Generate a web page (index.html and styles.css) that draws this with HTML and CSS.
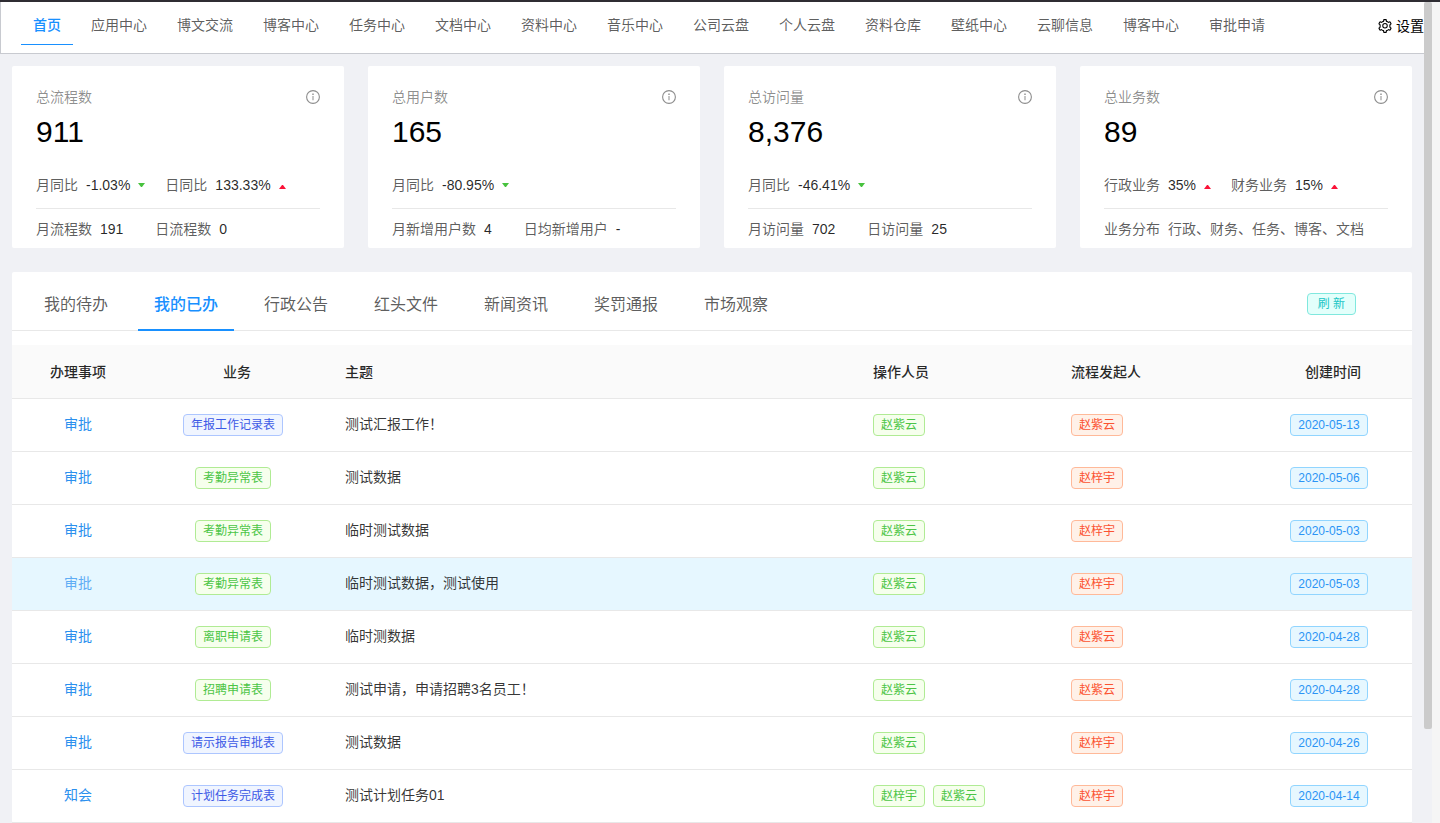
FILE: index.html
```html
<!DOCTYPE html>
<html lang="zh-CN">
<head>
<meta charset="utf-8">
<title>首页</title>
<link rel="stylesheet" href="styles.css">
</head>
<body>
<svg class="sprite" aria-hidden="true">
  <symbol id="info" viewBox="0 0 14 14">
    <circle cx="7" cy="7" r="6.4" fill="none" stroke="currentColor" stroke-width="1.1"/>
    <path d="M6.5 6h1v4.3h-1zM6.3 3.6h1.4V5H6.3z" fill="currentColor"/>
  </symbol>
</svg>
<div class="page">
  <div class="content">
    <header class="topbar">
      <nav class="nav">
        <a class="nav-item active" href="#">首页</a>
        <a class="nav-item" href="#">应用中心</a>
        <a class="nav-item" href="#">博文交流</a>
        <a class="nav-item" href="#">博客中心</a>
        <a class="nav-item" href="#">任务中心</a>
        <a class="nav-item" href="#">文档中心</a>
        <a class="nav-item" href="#">资料中心</a>
        <a class="nav-item" href="#">音乐中心</a>
        <a class="nav-item" href="#">公司云盘</a>
        <a class="nav-item" href="#">个人云盘</a>
        <a class="nav-item" href="#">资料仓库</a>
        <a class="nav-item" href="#">壁纸中心</a>
        <a class="nav-item" href="#">云聊信息</a>
        <a class="nav-item" href="#">博客中心</a>
        <a class="nav-item" href="#">审批申请</a>
      </nav>
      <button class="settings" type="button">
        <svg class="icon" viewBox="64 64 896 896" aria-hidden="true">
          <path fill="currentColor" fill-rule="evenodd" d="M924.8 625.7l-65.5-56c3.1-19 4.7-38.4 4.7-57.8s-1.6-38.8-4.7-57.8l65.5-56a32.03 32.03 0 0 0 9.3-35.2l-.9-2.6a443.74 443.74 0 0 0-79.7-137.9l-1.8-2.1a32.12 32.12 0 0 0-35.1-9.5l-81.3 28.9c-30-24.6-63.5-44-99.7-57.6l-15.7-85a32.05 32.05 0 0 0-25.8-25.7l-2.7-.5c-52.1-9.4-106.9-9.4-159 0l-2.7.5a32.05 32.05 0 0 0-25.8 25.7l-15.8 85.4a351.86 351.86 0 0 0-99 57.4l-81.9-29.1a32 32 0 0 0-35.1 9.5l-1.8 2.1a446.02 446.02 0 0 0-79.7 137.9l-.9 2.6c-4.5 12.5-.8 26.5 9.3 35.2l66.3 56.6c-3.1 18.8-4.6 38-4.6 57.1 0 19.2 1.5 38.4 4.6 57.1L99 625.5a32.03 32.03 0 0 0-9.3 35.2l.9 2.6c18.1 50.4 44.9 96.9 79.7 137.9l1.8 2.1a32.12 32.12 0 0 0 35.1 9.5l81.9-29.1c29.8 24.5 63.1 43.9 99 57.4l15.8 85.4a32.05 32.05 0 0 0 25.8 25.7l2.7.5a449.4 449.4 0 0 0 159 0l2.7-.5a32.05 32.05 0 0 0 25.8-25.7l15.7-85a350 350 0 0 0 99.7-57.6l81.3 28.9a32 32 0 0 0 35.1-9.5l1.8-2.1c34.8-41.1 61.6-87.5 79.7-137.9l.9-2.6c4.5-12.3.8-26.3-9.3-35zM788.3 465.9c2.5 15.1 3.8 30.6 3.8 46.1s-1.3 31-3.8 46.1l-6.6 40.1 74.7 63.9a370.03 370.03 0 0 1-42.6 73.6L721 702.8l-31.4 25.8c-23.9 19.6-50.5 35-79.3 45.8l-38.1 14.3-17.9 97a377.5 377.5 0 0 1-85 0l-17.9-97.2-37.8-14.5c-28.5-10.8-55-26.2-78.7-45.7l-31.4-25.9-93.4 33.2c-17-22.9-31.2-47.6-42.6-73.6l75.5-64.5-6.5-40c-2.4-14.9-3.7-30.3-3.7-45.5 0-15.3 1.2-30.6 3.7-45.5l6.5-40-75.5-64.5c11.3-26.1 25.6-50.7 42.6-73.6l93.4 33.2 31.4-25.9c23.7-19.5 50.2-34.9 78.7-45.7l37.9-14.3 17.9-97.2c28.1-3.2 56.8-3.2 85 0l17.9 97 38.1 14.3c28.7 10.8 55.4 26.2 79.3 45.8l31.4 25.8 92.8-32.9c17 22.9 31.2 47.6 42.6 73.6L781.8 426l6.5 39.9z"/>
          <circle cx="512" cy="502" r="144" fill="none" stroke="currentColor" stroke-width="66"/>
        </svg>
        <span>设置</span>
      </button>
    </header>

    <main class="main">
      <section class="cards">
        <article class="card">
          <div class="card-head"><span>总流程数</span><svg class="icon"><use href="#info"/></svg></div>
          <div class="total">911</div>
          <div class="trends">
            <span class="stat">月同比 <b>-1.03%</b><i class="down"></i></span>
            <span class="stat">日同比 <b>133.33%</b><i class="up"></i></span>
          </div>
          <div class="card-foot">
            <span class="stat">月流程数 <b>191</b></span>
            <span class="stat">日流程数 <b>0</b></span>
          </div>
        </article>
        <article class="card">
          <div class="card-head"><span>总用户数</span><svg class="icon"><use href="#info"/></svg></div>
          <div class="total">165</div>
          <div class="trends">
            <span class="stat">月同比 <b>-80.95%</b><i class="down"></i></span>
          </div>
          <div class="card-foot">
            <span class="stat">月新增用户数 <b>4</b></span>
            <span class="stat">日均新增用户 <b>-</b></span>
          </div>
        </article>
        <article class="card">
          <div class="card-head"><span>总访问量</span><svg class="icon"><use href="#info"/></svg></div>
          <div class="total">8,376</div>
          <div class="trends">
            <span class="stat">月同比 <b>-46.41%</b><i class="down"></i></span>
          </div>
          <div class="card-foot">
            <span class="stat">月访问量 <b>702</b></span>
            <span class="stat">日访问量 <b>25</b></span>
          </div>
        </article>
        <article class="card">
          <div class="card-head"><span>总业务数</span><svg class="icon"><use href="#info"/></svg></div>
          <div class="total">89</div>
          <div class="trends">
            <span class="stat">行政业务 <b>35%</b><i class="up"></i></span>
            <span class="stat">财务业务 <b>15%</b><i class="up"></i></span>
          </div>
          <div class="card-foot">
            <span class="stat">业务分布 <span>行政、财务、任务、博客、文档</span></span>
          </div>
        </article>
      </section>

      <section class="panel">
        <div class="tabbar">
          <div class="tabs" role="tablist">
            <button class="tab" type="button" role="tab">我的待办</button>
            <button class="tab active" type="button" role="tab" aria-selected="true">我的已办</button>
            <button class="tab" type="button" role="tab">行政公告</button>
            <button class="tab" type="button" role="tab">红头文件</button>
            <button class="tab" type="button" role="tab">新闻资讯</button>
            <button class="tab" type="button" role="tab">奖罚通报</button>
            <button class="tab" type="button" role="tab">市场观察</button>
          </div>
          <button class="tag cyan refresh" type="button">刷 新</button>
        </div>
        <table class="table">
          <colgroup>
            <col class="col-action"><col class="col-form"><col><col class="col-operator"><col class="col-starter"><col class="col-date">
          </colgroup>
          <thead>
            <tr><th class="center">办理事项</th><th class="center sorted">业务</th><th class="topic">主题</th><th>操作人员</th><th>流程发起人</th><th class="center sorted">创建时间</th></tr>
          </thead>
          <tbody>
            <tr><td class="center"><a href="#">审批</a></td><td class="center"><span class="tag geekblue">年报工作记录表</span></td><td class="topic">测试汇报工作！</td><td><span class="tag green">赵紫云</span></td><td><span class="tag volcano">赵紫云</span></td><td class="center"><span class="tag blue">2020-05-13</span></td></tr>
            <tr><td class="center"><a href="#">审批</a></td><td class="center"><span class="tag green">考勤异常表</span></td><td class="topic">测试数据</td><td><span class="tag green">赵紫云</span></td><td><span class="tag volcano">赵梓宇</span></td><td class="center"><span class="tag blue">2020-05-06</span></td></tr>
            <tr><td class="center"><a href="#">审批</a></td><td class="center"><span class="tag green">考勤异常表</span></td><td class="topic">临时测试数据</td><td><span class="tag green">赵紫云</span></td><td><span class="tag volcano">赵梓宇</span></td><td class="center"><span class="tag blue">2020-05-03</span></td></tr>
            <tr class="current"><td class="center"><a href="#">审批</a></td><td class="center"><span class="tag green">考勤异常表</span></td><td class="topic">临时测试数据，测试使用</td><td><span class="tag green">赵紫云</span></td><td><span class="tag volcano">赵梓宇</span></td><td class="center"><span class="tag blue">2020-05-03</span></td></tr>
            <tr><td class="center"><a href="#">审批</a></td><td class="center"><span class="tag green">离职申请表</span></td><td class="topic">临时测数据</td><td><span class="tag green">赵紫云</span></td><td><span class="tag volcano">赵紫云</span></td><td class="center"><span class="tag blue">2020-04-28</span></td></tr>
            <tr><td class="center"><a href="#">审批</a></td><td class="center"><span class="tag green">招聘申请表</span></td><td class="topic">测试申请，申请招聘3名员工！</td><td><span class="tag green">赵紫云</span></td><td><span class="tag volcano">赵紫云</span></td><td class="center"><span class="tag blue">2020-04-28</span></td></tr>
            <tr><td class="center"><a href="#">审批</a></td><td class="center"><span class="tag geekblue">请示报告审批表</span></td><td class="topic">测试数据</td><td><span class="tag green">赵紫云</span></td><td><span class="tag volcano">赵梓宇</span></td><td class="center"><span class="tag blue">2020-04-26</span></td></tr>
            <tr><td class="center"><a href="#">知会</a></td><td class="center"><span class="tag geekblue">计划任务完成表</span></td><td class="topic">测试计划任务01</td><td><span class="tag green">赵梓宇</span><span class="tag green">赵紫云</span></td><td><span class="tag volcano">赵梓宇</span></td><td class="center"><span class="tag blue">2020-04-14</span></td></tr>
          </tbody>
        </table>
      </section>
    </main>
  </div>
  <div class="scrollbar"><div class="thumb"></div></div>
</div>
</body>
</html>
```
FILE: styles.css
```css
* {
  box-sizing: border-box;
}

body {
  margin: 0;
  background: #f0f1f5;
  color: rgba(0, 0, 0, 0.65);
  font: 14px/22px "Liberation Sans", "Noto Sans CJK SC", sans-serif;
}

a {
  color: #2b90ee;
  text-decoration: none;
}

button {
  border: 0;
  padding: 0;
  background: none;
  color: inherit;
  font: inherit;
  cursor: pointer;
}

.sprite {
  display: none;
}

.icon {
  width: 14px;
  height: 14px;
  flex: none;
}

.page {
  display: flex;
  height: 100vh;
  overflow: hidden;
  border-top: 2px solid #2f2d33;
}

.content {
  flex: 1;
  min-width: 0;
}

.scrollbar {
  width: 16px;
  background: linear-gradient(to right, #f0f1f5 50%, #f5f5f5 50%);
}

.thumb {
  width: 8px;
  height: 727px;
  border-radius: 2px;
  background: #cbcbcb;
}

.topbar {
  display: flex;
  justify-content: space-between;
  align-items: flex-start;
  height: 52px;
  padding-left: 20px;
  border-left: 1px solid #c8cad0;
  border-bottom: 1px solid #c8cad0;
  background: #fff;
}

.nav {
  display: flex;
  gap: 6px;
}

.nav-item {
  height: 43px;
  padding: 12px 12px 0;
  color: rgba(0, 0, 0, 0.65);
  white-space: nowrap;
}

.nav-item.active {
  border-bottom: 1px solid #1890ff;
  color: #1890ff;
  font-weight: 500;
}

.settings {
  display: flex;
  align-items: center;
  gap: 4px;
  margin-top: 13px;
  color: #000;
  white-space: nowrap;
}

.main {
  padding: 12px;
}

.cards {
  display: grid;
  grid-template-columns: repeat(4, 1fr);
  gap: 24px;
}

.card {
  padding: 20px 24px 8px;
  border-radius: 2px;
  background: #fff;
}

.card-head {
  display: flex;
  justify-content: space-between;
  align-items: center;
  color: rgba(0, 0, 0, 0.45);
}

.total {
  margin-top: 4px;
  color: #000;
  font-size: 30px;
  line-height: 40px;
}

.trends {
  display: flex;
  gap: 20px;
  padding: 22px 0 12px;
  border-bottom: 1px solid #e8e8e8;
}

.card-foot {
  display: flex;
  gap: 32px;
  padding-top: 9px;
}

.stat {
  display: flex;
  align-items: center;
  gap: 8px;
  white-space: nowrap;
}

.stat b {
  color: rgba(0, 0, 0, 0.85);
  font-weight: 400;
}

.down,
.up {
  width: 7px;
  border: 0 solid transparent;
  border-width: 4px 3px 0;
}

.down {
  border-top-color: #47c23e;
}

.up {
  border-width: 0 3px 4px;
  border-bottom-color: #fb1238;
  margin-top: 4px;
}

.panel {
  margin-top: 24px;
  border-radius: 2px;
  background: #fff;
}

.tabbar {
  display: flex;
  justify-content: space-between;
  align-items: flex-start;
  height: 59px;
  padding: 0 56px 0 16px;
  border-bottom: 1px solid #e8e8e8;
}

.tabs {
  display: flex;
  gap: 14px;
}

.tab {
  height: 59px;
  padding: 8px 16px 0;
  border-bottom: 2px solid transparent;
  font-size: 16px;
  white-space: nowrap;
}

.tab.active {
  border-color: #1890ff;
  color: #1890ff;
  font-weight: 500;
}

.tag {
  display: inline-block;
  height: 22px;
  padding: 0 7px;
  border: 1px solid;
  border-radius: 4px;
  font-size: 12px;
  line-height: 20px;
  white-space: nowrap;
}

.tag + .tag {
  margin-left: 8px;
}

.refresh {
  margin-top: 21px;
  padding: 0 10px;
}

.geekblue {
  border-color: #adc6ff;
  background: #f0f5ff;
  color: #3d5ae6;
}

.green {
  border-color: #b0eb94;
  background: #f6ffed;
  color: #4cc546;
}

.volcano {
  border-color: #ffb999;
  background: #fff1e8;
  color: #fb5332;
}

.blue {
  border-color: #91d5ff;
  background: #e6f7ff;
  color: #2b94f5;
}

.cyan {
  border-color: #80e8de;
  background: #e3fffb;
  color: #20c6c6;
}

.table {
  width: 100%;
  margin-top: 14px;
  border-collapse: separate;
  border-spacing: 0;
  table-layout: fixed;
}

.col-action {
  width: 132px;
}

.col-form {
  width: 178px;
}

.col-operator {
  width: 198px;
}

.col-starter {
  width: 191px;
}

.col-date {
  width: 166px;
}

.table th,
.table td {
  height: 53px;
  padding: 0 16px;
  border-bottom: 1px solid #e8e8e8;
  text-align: left;
  vertical-align: middle;
}

.table th {
  height: 54px;
  background: #fafafa;
  color: rgba(0, 0, 0, 0.85);
  font-weight: 500;
}

.table td {
  padding-bottom: 2px;
  color: rgba(0, 0, 0, 0.8);
}

.table .center {
  padding-left: 0;
  padding-right: 0;
  text-align: center;
}

.table .sorted {
  padding-left: 8px;
}

.table .topic {
  padding-left: 23px;
}

.current td {
  background: #e6f7ff;
}

.current a {
  color: #5fadf5;
}
```
